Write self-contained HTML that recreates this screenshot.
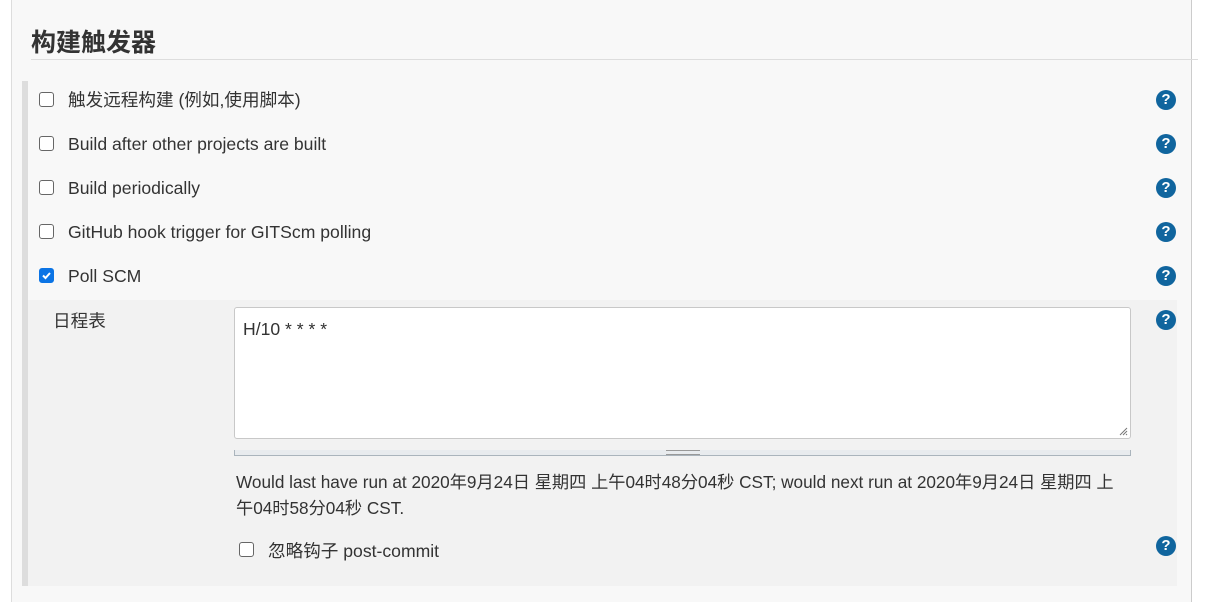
<!DOCTYPE html>
<html><head><meta charset="utf-8"><style>
body{margin:0;width:1210px;height:602px;background:#fff;font-family:"Liberation Sans","Noto Sans CJK SC",sans-serif;color:#333;overflow:hidden;position:relative}
.panel{position:absolute;left:11px;top:0;width:1179px;height:602px;background:#f8f8f8;border-left:1px solid #ddd;border-right:1px solid #ccc}
.h{position:absolute;left:31px;top:29px;font-size:25px;line-height:28px;font-weight:bold;color:#333}
.hl{position:absolute;left:31px;top:59px;width:1167px;height:1px;background:#ddd}
.bar{position:absolute;left:22px;top:81px;width:6px;height:505px;background:#ddd}
.sub{position:absolute;left:28px;top:300px;width:1149px;height:286px;background:#f2f2f2}
.cb{position:absolute;width:13px;height:13px;border:1px solid #666;border-radius:3px;background:#fff}
.cb.on{background:#0b74e5;border-color:#0b74e5}
.t{position:absolute;font-size:17.6px;line-height:20px;color:#333;white-space:nowrap}
.d{font-size:17.2px}
.q{position:absolute;left:1156px;width:20px;height:20px;border-radius:50%;background:#10659e;color:#fff;font-weight:bold;font-size:15px;text-align:center;line-height:20px}
.ta{position:absolute;left:234px;top:307px;width:895px;height:130px;background:#fff;border:1px solid #c8c8c8;border-radius:3px}
.grip{position:absolute;left:234px;top:450px;width:895px;height:5px;background:#e8ebee;border:1px solid #aab4bc;border-top:none}
</style></head><body>
<div class="panel"></div>
<div class="h">构建触发器</div>
<div class="hl"></div>
<div class="bar"></div>
<div class="sub"></div>

<div class="cb" style="left:39px;top:92px"></div><div class="t" style="left:68px;top:90px">触发远程构建 (例如,使用脚本)</div><div class="q" style="top:90px">?</div>
<div class="cb" style="left:39px;top:136px"></div><div class="t" style="left:68px;top:134px">Build after other projects are built</div><div class="q" style="top:134px">?</div>
<div class="cb" style="left:39px;top:180px"></div><div class="t" style="left:68px;top:178px">Build periodically</div><div class="q" style="top:178px">?</div>
<div class="cb" style="left:39px;top:224px"></div><div class="t" style="left:68px;top:222px">GitHub hook trigger for GITScm polling</div><div class="q" style="top:222px">?</div>
<div class="cb on" style="left:39px;top:268px"><svg width="13" height="13" style="position:absolute;left:0;top:0"><path d="M3 6.5l2.5 2.5 4.5-5" stroke="#fff" stroke-width="2" fill="none"/></svg></div><div class="t" style="left:68px;top:266px">Poll SCM</div><div class="q" style="top:266px">?</div>

<div class="t" style="left:53px;top:311px">日程表</div><div class="q" style="top:310px">?</div>
<div class="ta"><div class="t" style="left:8px;top:11px">H/10 * * * *</div>
<svg width="10" height="10" style="position:absolute;right:2px;bottom:2px"><path d="M9 2L2 9M9 5L5 9M9 8L8 9" stroke="#777" stroke-width="1"/></svg></div>
<div class="grip"><div style="position:absolute;left:431px;top:0;width:34px;height:3px;border-top:1px solid #999;border-bottom:1px solid #999"></div></div>
<div class="t d" style="left:236px;top:472px">Would last have run at 2020年9月24日 星期四 上午04时48分04秒 CST; would next run at 2020年9月24日 星期四 上</div>
<div class="t d" style="left:236px;top:498px">午04时58分04秒 CST.</div>
<div class="cb" style="left:239px;top:542px"></div><div class="t" style="left:268px;top:541px">忽略钩子 post-commit</div><div class="q" style="top:536px">?</div>
</body></html>
